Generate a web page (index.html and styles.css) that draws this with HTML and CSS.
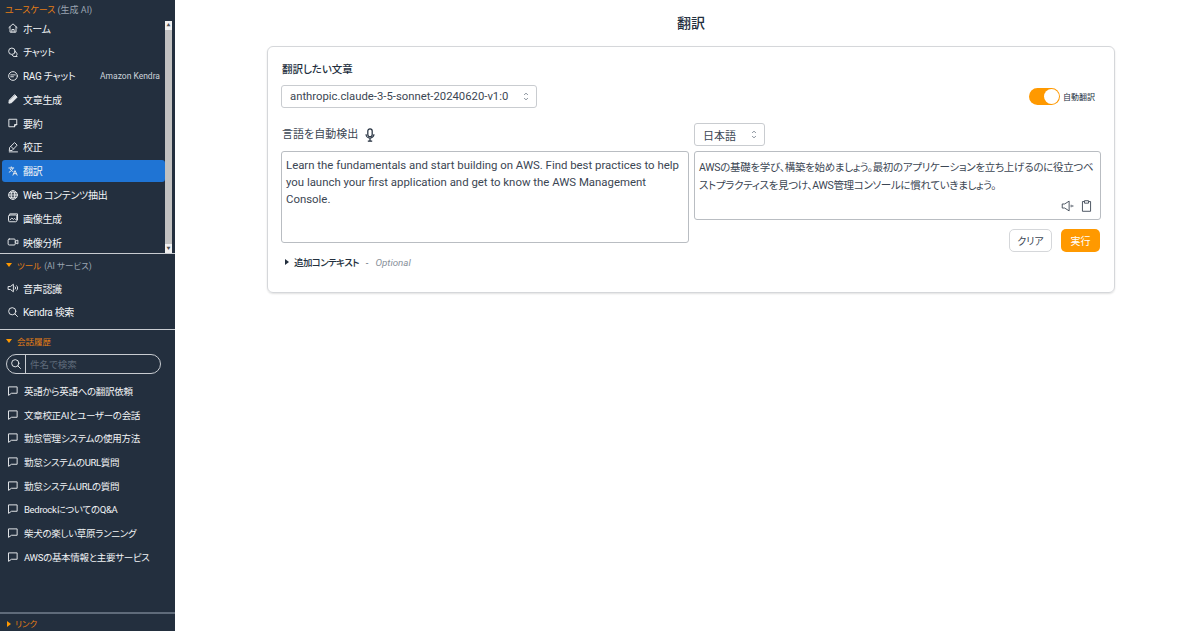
FILE: index.html
```html
<!DOCTYPE html>
<html lang="ja">
<head>
    <meta charset="UTF-8">
    <title>翻訳</title>
    <link rel="stylesheet" href="styles.css">
</head>
<body>
    <div class="app">
        <aside class="sidebar">
            <div class="usecase-label"><span class="orange">ユースケース</span> (生成 AI)</div>
            <div class="nav-scroll">
                <ul class="nav-list">
                    <li class="nav-item"><svg class="nav-icon" viewBox="0 0 16 16"><path d="M2.5 7.5 8 2.5l5.5 5M4 6.5V13.5h8V6.5M6.5 13.5V10h3v3.5"/></svg>ホーム</li>
                    <li class="nav-item"><svg class="nav-icon" viewBox="0 0 16 16"><circle cx="6.5" cy="7" r="4.3"/><path d="M11 7.5a3.3 3.3 0 0 1 1.5 5.5l1 1h-4a3.3 3.3 0 0 1-2.500-1.500"/></svg>チャット</li>
                    <li class="nav-item"><svg class="nav-icon" viewBox="0 0 16 16"><circle cx="8" cy="8" r="5.800"/><path d="M5 6.500h6M5 9h3.500"/></svg>RAG チャット<span class="nav-note">Amazon Kendra</span></li>
                    <li class="nav-item"><svg class="nav-icon" viewBox="0 0 16 16"><path class="solid" d="M10.500 2.500 13.500 5.500 6 13 2.500 13.500 3 10Z"/></svg>文章生成</li>
                    <li class="nav-item"><svg class="nav-icon" viewBox="0 0 16 16"><path d="M3 3h10v7l-3 3H3ZM13 10h-3v3"/></svg>要約</li>
                    <li class="nav-item"><svg class="nav-icon" viewBox="0 0 16 16"><path d="M10.500 2.500 13.500 5.500 7 12.500 3 13l.5-4ZM3 14.500h11M5.500 7.500l3 3"/></svg>校正</li>
                    <li class="nav-item active"><svg class="nav-icon" viewBox="0 0 16 16"><path d="M2.500 4h6.500M5.700 2.500V4M8 4c-.6 2.500-2.500 4.500-5 5.500M4.500 5.800c.8 1.500 2 2.500 3.500 3M8 13.500l2.700-6 2.800 6M9 11.500h3.500"/></svg>翻訳</li>
                    <li class="nav-item"><svg class="nav-icon" viewBox="0 0 16 16"><circle cx="8" cy="8" r="5.800"/><ellipse cx="8" cy="8" rx="2.500" ry="5.800"/><path d="M2.200 8h11.600M3 5h10M3 11h10"/></svg>Web コンテンツ抽出</li>
                    <li class="nav-item"><svg class="nav-icon" viewBox="0 0 16 16"><rect x="2" y="4" width="11" height="9" rx="1.500"/><path d="M4 2.500h10v8M4 10.500l2.500-2.500 2 2 1.500-1.500 1.500 1.500"/></svg>画像生成</li>
                    <li class="nav-item"><svg class="nav-icon" viewBox="0 0 16 16"><rect x="1.500" y="4" width="9.500" height="8" rx="1.500"/><path d="M11 7l3.500-1.500v5L11 9"/></svg>映像分析</li>
                </ul>
                <div class="scrollbar">
                    <span class="scroll-btn">▲</span>
                    <span class="scroll-thumb"></span>
                    <span class="scroll-btn">▼</span>
                </div>
            </div>

            <section class="side-section tools">
                <div class="section-label"><span class="caret-down"></span><span class="orange">ツール</span> (AI サービス)</div>
                <ul class="nav-list">
                    <li class="nav-item"><svg class="nav-icon" viewBox="0 0 16 16"><path d="M2 6h2.500L8.500 3v10l-4-3H2ZM11 6.500a2 2 0 0 1 0 3M13 5a4 4 0 0 1 0 6"/></svg>音声認識</li>
                    <li class="nav-item"><svg class="nav-icon" viewBox="0 0 16 16"><circle cx="7" cy="7" r="4.800"/><path d="m10.500 10.500 3.500 3.500"/></svg>Kendra 検索</li>
                </ul>
            </section>

            <section class="side-section history">
                <div class="section-label"><span class="caret-down"></span><span class="orange">会話履歴</span></div>
                <div class="search-box">
                    <span class="search-icon"><svg class="nav-icon" viewBox="0 0 16 16"><circle cx="7" cy="7" r="4.800"/><path d="m10.500 10.500 3.500 3.500"/></svg></span>
                    <span class="search-text">件名で検索</span>
                </div>
                <ul class="history-list">
                    <li class="history-item"><svg class="nav-icon" viewBox="0 0 16 16"><path d="M2.500 2.500h11v8.500H6l-3.500 2.500Z"/></svg>英語から英語への翻訳依頼</li>
                    <li class="history-item"><svg class="nav-icon" viewBox="0 0 16 16"><path d="M2.500 2.500h11v8.500H6l-3.500 2.500Z"/></svg>文章校正AIとユーザーの会話</li>
                    <li class="history-item"><svg class="nav-icon" viewBox="0 0 16 16"><path d="M2.500 2.500h11v8.500H6l-3.500 2.500Z"/></svg>勤怠管理システムの使用方法</li>
                    <li class="history-item"><svg class="nav-icon" viewBox="0 0 16 16"><path d="M2.500 2.500h11v8.500H6l-3.500 2.500Z"/></svg>勤怠システムのURL質問</li>
                    <li class="history-item"><svg class="nav-icon" viewBox="0 0 16 16"><path d="M2.500 2.500h11v8.500H6l-3.500 2.500Z"/></svg>勤怠システムURLの質問</li>
                    <li class="history-item"><svg class="nav-icon" viewBox="0 0 16 16"><path d="M2.500 2.500h11v8.500H6l-3.500 2.500Z"/></svg>BedrockについてのQ&amp;A</li>
                    <li class="history-item"><svg class="nav-icon" viewBox="0 0 16 16"><path d="M2.500 2.500h11v8.500H6l-3.500 2.500Z"/></svg>柴犬の楽しい草原ランニング</li>
                    <li class="history-item"><svg class="nav-icon" viewBox="0 0 16 16"><path d="M2.500 2.500h11v8.500H6l-3.500 2.500Z"/></svg>AWSの基本情報と主要サービス</li>
                </ul>
            </section>

            <div class="link-section"><span class="caret-right"></span><span class="orange">リンク</span></div>
        </aside>

        <main class="main">
            <h1 class="page-title">翻訳</h1>
            <div class="card">
                <div class="field-label">翻訳したい文章</div>
                <div class="top-row">
                    <div class="select model-select">anthropic.claude-3-5-sonnet-20240620-v1:0<svg class="updown" viewBox="0 0 8 12"><path d="M1.500 4 4 1.500 6.500 4M1.500 8 4 10.500 6.500 8"/></svg></div>
                    <div class="auto-toggle">
                        <span class="toggle"><span class="knob"></span></span>
                        <span class="toggle-label">自動翻訳</span>
                    </div>
                </div>
                <div class="translate-grid">
                    <div class="col">
                        <div class="lang-row">
                            <span class="detect">言語を自動検出</span>
                            <svg class="mic" viewBox="0 0 16 16"><rect x="5.500" y="1" width="5" height="9" rx="2.500"/><path d="M3.500 7a4.500 4.500 0 0 0 9 0M8 11.500V15M5.500 15h5"/></svg>
                        </div>
                        <div class="textbox source">Learn the fundamentals and start building on AWS. Find best practices to help you launch your first application and get to know the AWS Management Console.</div>
                        <div class="extra"><span class="caret-right dark"></span><b>追加コンテキスト</b><span class="dash">-</span><i>Optional</i></div>
                    </div>
                    <div class="col">
                        <div class="lang-row">
                            <div class="select lang-select">日本語<svg class="updown" viewBox="0 0 8 12"><path d="M1.500 4 4 1.500 6.500 4M1.500 8 4 10.500 6.500 8"/></svg></div>
                        </div>
                        <div class="textbox result">
                            <div class="result-text">AWSの基礎を学び、構築を始めましょう。最初のアプリケーションを立ち上げるのに役立つベストプラクティスを見つけ、AWS管理コンソールに慣れていきましょう。</div>
                            <div class="result-tools">
                                <svg class="tool-icon" viewBox="0 0 16 16"><path d="M1.500 5.500h3L10 2v12L4.500 10.500h-3ZM12.500 6.500v3M14.500 7v2"/></svg>
                                <svg class="tool-icon" viewBox="0 0 16 16"><path d="M5 2.500H3v12h10v-12h-2M5.500 1.500h5v3h-5Z"/></svg>
                            </div>
                        </div>
                        <div class="actions">
                            <button class="btn btn-clear">クリア</button>
                            <button class="btn btn-run">実行</button>
                        </div>
                    </div>
                </div>
            </div>
        </main>
    </div>
</body>
</html>
```

FILE: styles.css
```css
* {
    margin: 0;
    padding: 0;
    box-sizing: border-box;
}

body {
    font-family: Roboto, "Noto Sans CJK JP", sans-serif;
    font-feature-settings: "palt";
    font-size: 12px;
    color: #232f3e;
    background: #fff;
    overflow: hidden;
}

ul {
    list-style: none;
}

.app {
    display: flex;
    height: 631px;
}

.orange {
    color: #e67e14;
}

/* sidebar */
.sidebar {
    width: 175px;
    flex-shrink: 0;
    background: #232f3e;
    color: #fff;
    display: flex;
    flex-direction: column;
}

.usecase-label {
    height: 17px;
    padding: 3px 0 0 5px;
    font-size: 9px;
    line-height: 14px;
    color: #9aa5b1;
}

.nav-scroll {
    display: flex;
    height: 236px;
    padding-left: 2px;
    overflow: hidden;
}

.nav-scroll .nav-list {
    flex: 1;
    min-width: 0;
}

.nav-item {
    height: 22px;
    margin-bottom: 1.8px;
    display: flex;
    align-items: center;
    gap: 4px;
    padding-left: 5px;
    font-size: 10px;
    letter-spacing: -0.3px;
    white-space: nowrap;
    border-radius: 3px;
    color: #f2f4f6;
}

.nav-item.active {
    background: #1f74d4;
}

.nav-note {
    margin-left: auto;
    margin-right: 5px;
    font-size: 8.5px;
    letter-spacing: 0;
    color: #ccd3da;
}

.nav-icon {
    width: 12px;
    height: 12px;
    flex-shrink: 0;
    fill: none;
    stroke: #e4e7ea;
    stroke-width: 1.3;
    stroke-linejoin: round;
    stroke-linecap: round;
}

.nav-icon .solid {
    fill: #e4e7ea;
}

.scrollbar {
    width: 7px;
    margin: 4px 3px 0 0;
    background: #f1f1f1;
    display: flex;
    flex-direction: column;
    align-items: center;
}

.scroll-btn {
    height: 9px;
    font-size: 4px;
    line-height: 9px;
    color: #505050;
}

.scroll-thumb {
    flex: 1;
    width: 100%;
    background: #c1c1c1;
}

.side-section {
    border-top: 1px solid #c8ccd1;
}

.tools {
    height: 76px;
}

.section-label {
    height: 22px;
    display: flex;
    align-items: center;
    gap: 3px;
    padding-left: 6px;
    font-size: 8.5px;
    color: #9aa5b1;
}

.tools .nav-list {
    padding: 1px 2px 0;
}

.caret-down {
    width: 0;
    height: 0;
    margin-right: 2px;
    border-left: 3px solid transparent;
    border-right: 3px solid transparent;
    border-top: 4px solid #ff9900;
}

.caret-right {
    display: inline-block;
    width: 0;
    height: 0;
    margin-right: 4px;
    border-top: 3px solid transparent;
    border-bottom: 3px solid transparent;
    border-left: 4px solid #ff9900;
}

.caret-right.dark {
    margin-right: 5px;
    border-left-color: #232f3e;
}

.history {
    flex: 1;
}

.search-box {
    height: 20px;
    margin: 2px 14px 0 6px;
    display: flex;
    align-items: center;
    border: 1px solid #c8ccd1;
    border-radius: 10px;
}

.search-icon {
    width: 19px;
    height: 100%;
    display: flex;
    align-items: center;
    justify-content: center;
    border-right: 1px solid #c8ccd1;
}

.search-text {
    padding-left: 4px;
    font-size: 9.5px;
    color: #5f6b7a;
}

.history-list {
    margin-top: 5px;
}

.history-item {
    height: 23.7px;
    display: flex;
    align-items: center;
    gap: 5px;
    padding-left: 7px;
    font-size: 9.5px;
    letter-spacing: -0.3px;
    white-space: nowrap;
    color: #f2f4f6;
}

.link-section {
    height: 19px;
    border-top: 2px solid #5f6b7a;
    padding: 3px 0 0 7px;
    font-size: 8.5px;
    line-height: 14px;
}

/* main */
.main {
    flex: 1;
    min-width: 0;
    padding: 0 85px 0 92px;
}

.page-title {
    height: 46px;
    font-size: 14px;
    line-height: 46px;
    font-weight: 500;
    text-align: center;
}

.card {
    height: 247px;
    border: 1px solid #d5d7da;
    border-radius: 6px;
    box-shadow: 0 1px 2px rgba(0, 0, 0, 0.12);
    padding: 15px 13px 0;
}

.field-label {
    font-size: 10.5px;
    font-weight: 500;
    line-height: 15px;
    margin-bottom: 8px;
    padding-left: 1px;
}

.top-row {
    display: flex;
    justify-content: space-between;
    align-items: center;
    height: 23px;
}

.select {
    height: 23px;
    display: flex;
    align-items: center;
    justify-content: space-between;
    border: 1px solid #c9ccd0;
    border-radius: 3px;
    padding: 0 7px 0 8px;
    background: #fff;
    color: #3b4653;
    white-space: nowrap;
}

.model-select {
    width: 256px;
    font-size: 11.3px;
}

.lang-select {
    width: 71px;
    font-size: 11px;
}

.updown {
    width: 6px;
    height: 9px;
    fill: none;
    stroke: #5f6b7a;
    stroke-width: 1;
}

.auto-toggle {
    display: flex;
    align-items: center;
    gap: 3px;
    padding-right: 6px;
}

.toggle {
    width: 31px;
    height: 17px;
    display: flex;
    justify-content: flex-end;
    align-items: center;
    background: #ff9900;
    border-radius: 9px;
    padding-right: 1px;
}

.knob {
    width: 15px;
    height: 15px;
    background: #fff;
    border-radius: 50%;
}

.toggle-label {
    font-size: 8px;
}

.translate-grid {
    display: grid;
    grid-template-columns: 408px 407px;
    gap: 5px;
    margin-top: 15px;
}

.lang-row {
    height: 28px;
    display: flex;
    align-items: flex-start;
    gap: 5px;
}

.detect {
    padding-left: 1px;
    font-size: 11px;
    color: #3b4653;
    line-height: 24px;
}

.mic {
    width: 14px;
    height: 16px;
    margin-top: 4px;
    fill: none;
    stroke: #232f3e;
    stroke-width: 1.4;
}

.textbox {
    border: 1px solid #b9bdc2;
    border-radius: 3px;
    color: #3b4653;
    font-size: 11.4px;
    line-height: 17px;
    padding: 5px 4px 4px;
}

.source {
    height: 92px;
}

.result {
    height: 69px;
    display: flex;
    flex-direction: column;
    justify-content: space-between;
    padding: 7px 4px 6px;
}

.result-text {
    font-size: 10.5px;
    letter-spacing: -0.3px;
    line-height: 17.5px;
}

.result-tools {
    display: flex;
    justify-content: flex-end;
    gap: 6px;
    padding-right: 3px;
}

.tool-icon {
    width: 13px;
    height: 14px;
    fill: none;
    stroke: #3b4653;
    stroke-width: 1.1;
}

.extra {
    display: flex;
    align-items: center;
    margin: 12px 0 0 4px;
    font-size: 9.5px;
}

.extra b {
    font-weight: 500;
    letter-spacing: -0.6px;
}

.dash {
    margin: 0 7px;
    color: #5f6b7a;
}

.extra i {
    color: #8a929b;
    font-size: 9.8px;
}

.actions {
    display: flex;
    justify-content: flex-end;
    gap: 9px;
    margin-top: 9px;
    padding-right: 1px;
}

.btn {
    height: 23px;
    border-radius: 5px;
    font-family: inherit;
    font-feature-settings: inherit;
    font-size: 10px;
}

.btn-clear {
    width: 43px;
    background: #fff;
    border: 1px solid #d5d7da;
    color: #3b4653;
}

.btn-run {
    width: 39px;
    background: #ff9900;
    border: 0;
    color: #fff;
}
```
